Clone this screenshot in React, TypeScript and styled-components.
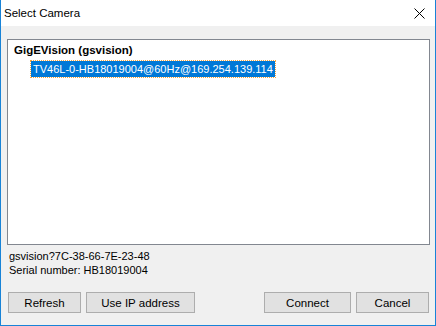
import React, { useState } from "react";
import styled, { createGlobalStyle } from "styled-components";

const GlobalStyle = createGlobalStyle`
  html, body {
    margin: 0;
    padding: 0;
    background: #ffffff;
  }
  body {
    font-family: "Liberation Sans", Arial, sans-serif;
    font-size: 11px;
    color: #000000;
  }
`;

const Window = styled.div`
  width: 436px;
  height: 326px;
  box-sizing: border-box;
  border: 1px solid #1883d7;
  border-top: none;
  background: #f0f0f0;
  display: flex;
  flex-direction: column;
`;

const TitleBar = styled.header`
  height: 26px;
  flex: none;
  background: #ffffff;
  display: flex;
  align-items: center;
  justify-content: space-between;
  padding-left: 3px;
  padding-right: 10px;
`;

const Title = styled.h1`
  margin: 0;
  font-size: 11.5px;
  font-weight: normal;
  color: #000000;
`;

const CloseButton = styled.button`
  width: 12px;
  height: 12px;
  padding: 0;
  border: none;
  background: none;
  display: grid;
  place-items: center;
`;

const Body = styled.div`
  flex: 1;
  display: flex;
  flex-direction: column;
  padding: 13px 5px 12px 6px;
`;

const ListBox = styled.div`
  height: 206px;
  box-sizing: border-box;
  border: 1px solid #828790;
  background: #ffffff;
  padding: 3px 6px;
`;

const GroupHeader = styled.div`
  font-weight: bold;
  font-size: 11.5px;
  line-height: 15px;
  height: 16px;
`;

const Item = styled.div<{ $selected?: boolean }>`
  display: inline-block;
  margin-left: 17px;
  margin-top: 2px;
  padding: 0 2px 0 2px;
  line-height: 16px;
  background: ${({ $selected }) => ($selected ? "#0078d7" : "transparent")};
  color: ${({ $selected }) => ($selected ? "#ffffff" : "#000000")};
  outline: ${({ $selected }) => ($selected ? "1px dotted #f7a33c" : "none")};
  cursor: default;
`;

const Info = styled.div`
  margin-top: 4px;
  padding-left: 2px;
  line-height: 14px;
`;

const ButtonRow = styled.div`
  margin-top: auto;
  display: flex;
  align-items: center;
  gap: 5px;
  padding-left: 1px;
  padding-right: 1px;
`;

const Spacer = styled.div`
  flex: 1;
`;

const Button = styled.button<{ $width: number }>`
  width: ${({ $width }) => $width}px;
  height: 21px;
  box-sizing: border-box;
  border: 1px solid #adadad;
  background: #e1e1e1;
  font-family: inherit;
  font-size: 11.5px;
  color: #000000;
  padding: 0;
`;

export default function App() {
  const [selected, setSelected] = useState(true);

  return (
    <>
      <GlobalStyle />
      <Window>
        <TitleBar>
          <Title>Select Camera</Title>
          <CloseButton aria-label="Close">
            <svg width="11" height="11" viewBox="0 0 11 11">
              <path d="M0.5 0.5 L10.5 10.5 M10.5 0.5 L0.5 10.5" stroke="#000" strokeWidth="1" />
            </svg>
          </CloseButton>
        </TitleBar>
        <Body>
          <ListBox>
            <GroupHeader>GigEVision (gsvision)</GroupHeader>
            <Item $selected={selected} onClick={() => setSelected(true)}>
              TV46L-0-HB18019004@60Hz@169.254.139.114
            </Item>
          </ListBox>
          <Info>
            gsvision?7C-38-66-7E-23-48
            <br />
            Serial number: HB18019004
          </Info>
          <ButtonRow>
            <Button $width={73}>Refresh</Button>
            <Button $width={109}>Use IP address</Button>
            <Spacer />
            <Button $width={87}>Connect</Button>
            <Button $width={73}>Cancel</Button>
          </ButtonRow>
        </Body>
      </Window>
    </>
  );
}
